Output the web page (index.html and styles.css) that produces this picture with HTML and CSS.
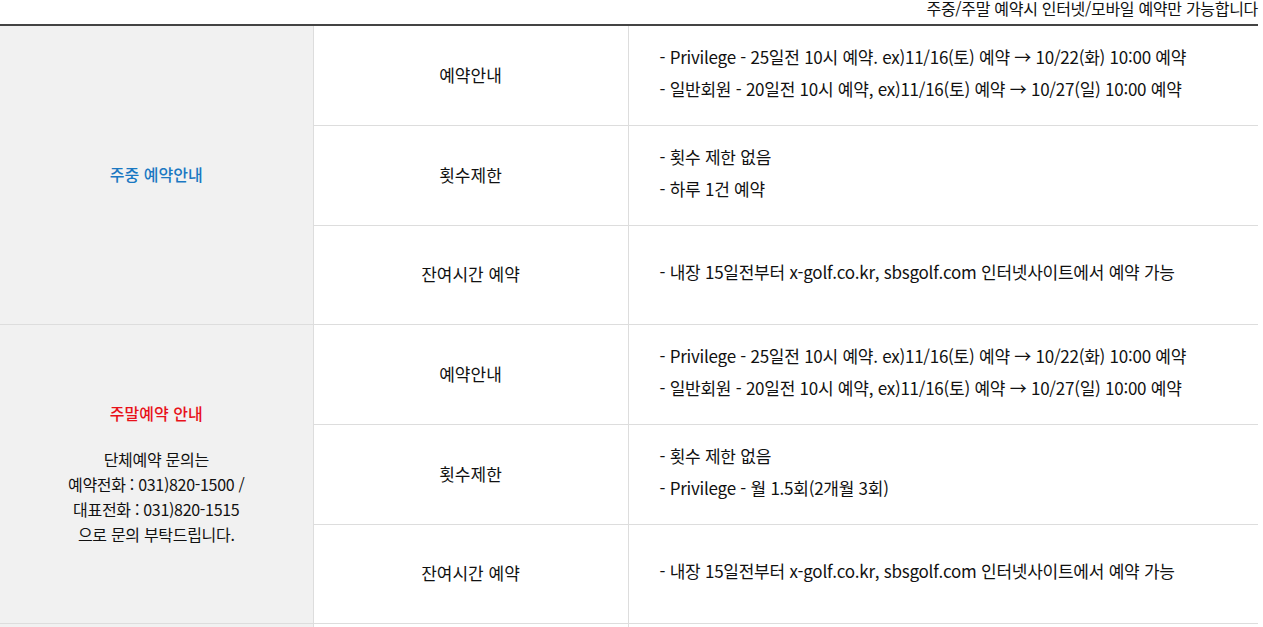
FILE: index.html
```html
<!DOCTYPE html>
<html lang="ko">
<head>
<meta charset="utf-8">
<link rel="stylesheet" href="styles.css">
</head>
<body>
<div class="wrap">
  <p class="notice">주중/주말 예약시 인터넷/모바일 예약만 가능합니다</p>
  <table class="rsv">
    <colgroup>
      <col class="c1"><col class="c2"><col class="c3">
    </colgroup>
    <tbody>
      <tr>
        <th rowspan="3" class="sec"><span class="ttl blue">주중 예약안내</span></th>
        <td class="lbl">예약안내</td>
        <td class="txt">
          <p>- Privilege - 25일전 10시 예약. ex)11/16(토) 예약 → 10/22(화) 10:00 예약</p>
          <p>- 일반회원 - 20일전 10시 예약, ex)11/16(토) 예약 → 10/27(일) 10:00 예약</p>
        </td>
      </tr>
      <tr>
        <td class="lbl">횟수제한</td>
        <td class="txt">
          <p>- 횟수 제한 없음</p>
          <p>- 하루 1건 예약</p>
        </td>
      </tr>
      <tr class="short">
        <td class="lbl">잔여시간 예약</td>
        <td class="txt">
          <p>- 내장 15일전부터 x-golf.co.kr, sbsgolf.com 인터넷사이트에서 예약 가능</p>
        </td>
      </tr>
      <tr>
        <th rowspan="3" class="sec">
          <span class="ttl red">주말예약 안내</span>
          <span class="desc">단체예약 문의는<br>예약전화 : 031)820-1500 /<br>대표전화 : 031)820-1515<br>으로 문의 부탁드립니다.</span>
        </th>
        <td class="lbl">예약안내</td>
        <td class="txt">
          <p>- Privilege - 25일전 10시 예약. ex)11/16(토) 예약 → 10/22(화) 10:00 예약</p>
          <p>- 일반회원 - 20일전 10시 예약, ex)11/16(토) 예약 → 10/27(일) 10:00 예약</p>
        </td>
      </tr>
      <tr>
        <td class="lbl">횟수제한</td>
        <td class="txt">
          <p>- 횟수 제한 없음</p>
          <p>- Privilege - 월 1.5회(2개월 3회)</p>
        </td>
      </tr>
      <tr class="short">
        <td class="lbl">잔여시간 예약</td>
        <td class="txt">
          <p>- 내장 15일전부터 x-golf.co.kr, sbsgolf.com 인터넷사이트에서 예약 가능</p>
        </td>
      </tr>
      <tr class="next">
        <th class="sec"></th>
        <td class="lbl"></td>
        <td class="txt"></td>
      </tr>
    </tbody>
  </table>
</div>
</body>
</html>
```
FILE: styles.css
```css
html, body {
  margin: 0;
  padding: 0;
  background: #fff;
}
body {
  font-family: "Noto Sans CJK KR", "Noto Sans", sans-serif;
  font-size: 16px;
  color: #111;
  overflow: hidden;
}
.wrap {
  width: 1258px;
}
.notice {
  margin: 0;
  height: 24px;
  line-height: 16px;
  text-align: right;
  letter-spacing: -0.3px;
}
.rsv {
  width: 1258px;
  border-collapse: collapse;
  table-layout: fixed;
  border-top: 2px solid #444;
}
.c1 { width: 313px; }
.c2 { width: 315px; }
.c3 { width: auto; }
.rsv tr { height: 100px; }
.rsv tr.short { height: 99px; }
.rsv th, .rsv td {
  border: 1px solid #ddd;
  border-top: none;
  padding: 0;
  vertical-align: middle;
  font-weight: normal;
}
.rsv tr > :first-child { border-left: none; }
.rsv tr > :last-child { border-right: none; }
.sec {
  background: #f1f1f1;
  text-align: center;
}
.ttl {
  display: block;
  line-height: 25px;
  font-weight: 500;
}
.blue { color: #1a78c2; }
.red { color: #e8111a; margin-bottom: 21px; }
.desc {
  display: block;
  line-height: 25px;
  letter-spacing: -0.3px;
}
.lbl {
  text-align: center;
  font-size: 17px;
  padding-bottom: 2px !important;
}
.txt {
  padding: 0 0 5px 31px !important;
  font-size: 17px;
  letter-spacing: -0.25px;
}
.txt p {
  margin: 0;
  line-height: 32px;
}
.rsv tr.next { height: 40px; }
```
